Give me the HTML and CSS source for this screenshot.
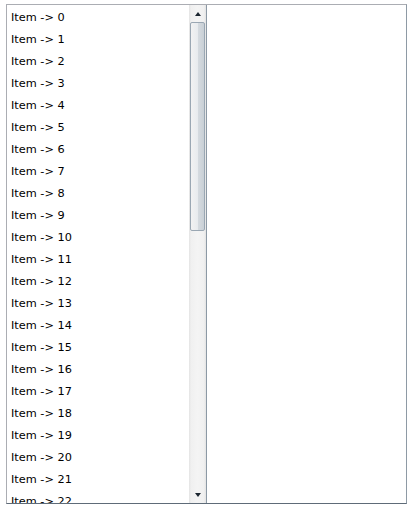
FILE: index.html
```html
<!DOCTYPE html>
<html>
<head>
<meta charset="utf-8">
<link rel="stylesheet" href="styles.css">
</head>
<body>
<div class="app">
  <div class="listbox">
    <div class="items" id="items"></div>
    <div class="scrollbar">
      <div class="arrow up"><span class="tri-up"></span></div>
      <div class="track">
        <div class="thumb"></div>
      </div>
      <div class="arrow down"><span class="tri-down"></span></div>
    </div>
  </div>
  <div class="panel"></div>
</div>
<script src="script.js"></script>
</body>
</html>
```
FILE: script.js
```js
var c = document.getElementById('items');
for (var i = 0; i < 23; i++) {
  var d = document.createElement('div');
  d.className = 'item';
  d.textContent = 'Item -> ' + i;
  c.appendChild(d);
}
```
FILE: styles.css
```css
html, body {
  margin: 0;
  padding: 0;
  background: #ffffff;
}
.app {
  display: flex;
  padding: 4px 0 0 6px;
  font-family: Tahoma, "DejaVu Sans", Verdana, sans-serif;
  font-size: 11.3px;
  color: #000;
}
.listbox {
  width: 201px;
  height: 500px;
  box-sizing: border-box;
  display: flex;
  border: 1px solid #abadb3;
  border-bottom-color: #5e6b78;
  border-right: none;
}
.items {
  flex: 1;
  overflow: hidden;
  padding-left: 4px;
  padding-top: 2px;
}
.item {
  height: 22px;
  line-height: 22px;
  white-space: nowrap;
}
.scrollbar {
  width: 17px;
  display: flex;
  flex-direction: column;
  background: linear-gradient(to right, #e3e3e3 0, #f0f0f0 2px, #f4f4f4 50%, #f0f0f0 calc(100% - 2px), #e3e3e3 100%);
  border-right: 1px solid #8c99a5;
}
.arrow {
  height: 17px;
  display: flex;
  align-items: center;
  justify-content: center;
}
.tri-up {
  width: 0; height: 0;
  border-left: 3px solid transparent;
  border-right: 3px solid transparent;
  border-bottom: 4px solid #1c2630;
}
.tri-down {
  width: 0; height: 0;
  border-left: 3px solid transparent;
  border-right: 3px solid transparent;
  border-top: 4px solid #1c2630;
}
.track {
  flex: 1;
  display: flex;
  flex-direction: column;
}
.thumb {
  height: 209px;
  margin: 0 1px;
  box-sizing: border-box;
  border: 1px solid #9aa7b3;
  border-radius: 2px;
  background: linear-gradient(to right, #f2f2f2 0, #e8ebee 50%, #d6dbe0 51%, #c9d0d6 100%);
}
.panel {
  width: 200px;
  height: 500px;
  box-sizing: border-box;
  border: 1px solid #abadb3;
  border-right-color: #8e9aa5;
  border-bottom-color: #5e6b78;
  border-left: none;
}
```
